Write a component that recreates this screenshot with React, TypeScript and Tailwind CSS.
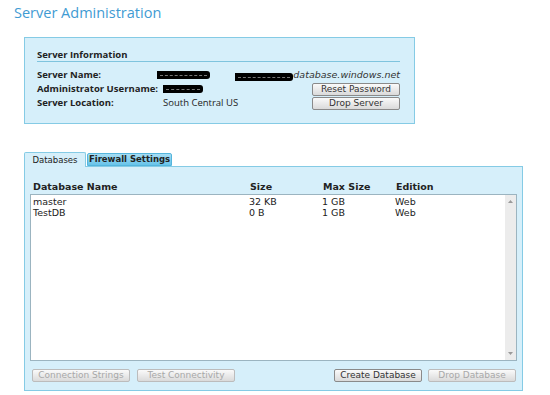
import React from "react";

const seg = "font-['Open_Sans',sans-serif]";
const ver = "font-['DejaVu_Sans',sans-serif]";

function Btn({ label, disabled, className }: { label: string; disabled?: boolean; className?: string }) {
  return (
    <button
      type="button"
      className={`h-[13px] rounded-[2px] border bg-gradient-to-b from-[#fafafa] to-[#dadada] text-[9px] leading-[11px] ${ver} ${
        disabled ? "border-[#bcbcbc] text-[#a8a8a8]" : "border-[#8a8a8a] text-[#333]"
      } ${className ?? ""}`}
    >
      {label}
    </button>
  );
}

function Redacted({ w }: { w: number }) {
  return (
    <span className="inline-flex h-[8px] items-center rounded-r-[3px] bg-black px-[3px]" style={{ width: w }}>
      <span className="h-px w-full border-t border-dashed border-[#777]" />
    </span>
  );
}

const rows = [
  { name: "master", size: "32 KB", max: "1 GB", ed: "Web" },
  { name: "TestDB", size: "0 B", max: "1 GB", ed: "Web" },
];

export default function App(): React.ReactElement {
  return (
    <div className="h-[395px] w-[550px] overflow-hidden bg-white">
      <h1 className={`pl-[14px] pt-[3px] text-[14.5px] leading-[20px] text-[#3f9bd3] ${seg}`}>Server Administration</h1>

      <section className="ml-[24px] mt-[14px] h-[87px] w-[391px] border border-[#85cbe5] bg-[#d6effa] pl-[12px] pr-[14px] pt-[11px]">
        <h2 className={`h-[13px] border-b border-[#7fc4de] text-[9.5px] font-bold leading-[12px] text-[#222] ${seg}`}>
          Server Information
        </h2>
        <div className={`mt-[6px] text-[9.5px] text-[#222] ${seg}`}>
          <div className="flex h-[14px] items-center">
            <span className="w-[126px] font-bold">Server Name:</span>
            <Redacted w={55} />
            <span className="ml-[25px]">
              <Redacted w={58} />
            </span>
            <span className={`italic text-[9.5px] text-[#333] ${ver}`}>database.windows.net</span>
          </div>
          <div className="flex h-[14px] items-center">
            <span className="w-[126px] font-bold">Administrator Username:</span>
            <Redacted w={40} />
            <Btn label="Reset Password" className="ml-auto w-[88px]" />
          </div>
          <div className="flex h-[14px] items-center">
            <span className="w-[126px] font-bold">Server Location:</span>
            <span>South Central US</span>
            <Btn label="Drop Server" className="ml-auto w-[88px]" />
          </div>
        </div>
      </section>

      <div className="ml-[24px] mt-[28px] w-[499px]">
        <div className={`flex items-end text-[8.5px] text-[#222] ${ver}`}>
          <div className="relative z-10 -mb-px flex h-[15px] w-[62px] items-center justify-center rounded-t-[2px] border border-b-0 border-[#85cbe5] bg-[#d6effa]">
            Databases
          </div>
          <div className="ml-[1px] flex h-[13px] w-[85px] items-center justify-center rounded-t-[2px] border border-[#55b5dc] bg-gradient-to-b from-[#a6ddf3] to-[#66c3e9] font-bold">
            Firewall Settings
          </div>
        </div>
        <section className={`h-[225px] border border-[#85cbe5] bg-[#d6effa] px-[5px] pt-[13px] ${ver}`}>
          <div className="grid h-[14px] grid-cols-[217px_73px_73px_1fr] items-center pl-[3px] text-[9.5px] font-bold text-[#222]">
            <span>Database Name</span>
            <span>Size</span>
            <span>Max Size</span>
            <span>Edition</span>
          </div>
          <div className="flex h-[167px] border border-[#9bb4c0] bg-white">
            <div className="flex-1 pt-[1px] text-[9.5px] text-[#222]">
              {rows.map((r) => (
                <div key={r.name} className="grid h-[11px] grid-cols-[216px_73px_73px_1fr] items-center pl-[2px] leading-[11px]">
                  <span>{r.name}</span>
                  <span>{r.size}</span>
                  <span>{r.max}</span>
                  <span>{r.ed}</span>
                </div>
              ))}
            </div>
            <div className="flex w-[11px] flex-col items-center justify-between bg-[#ececec] py-[5px]">
              <svg width="5" height="3" viewBox="0 0 5 3">
                <path d="M0 3 L2.5 0 L5 3 Z" fill="#9a9a9a" />
              </svg>
              <svg width="5" height="3" viewBox="0 0 5 3">
                <path d="M0 0 L2.5 3 L5 0 Z" fill="#9a9a9a" />
              </svg>
            </div>
          </div>
          <div className="mt-[8px] flex items-center">
            <Btn label="Connection Strings" disabled className="ml-[2px] w-[98px]" />
            <Btn label="Test Connectivity" disabled className="ml-[7px] w-[98px]" />
            <Btn label="Create Database" className="ml-auto w-[88px]" />
            <Btn label="Drop Database" disabled className="ml-[6px] mr-[1px] w-[88px]" />
          </div>
        </section>
      </div>
    </div>
  );
}
